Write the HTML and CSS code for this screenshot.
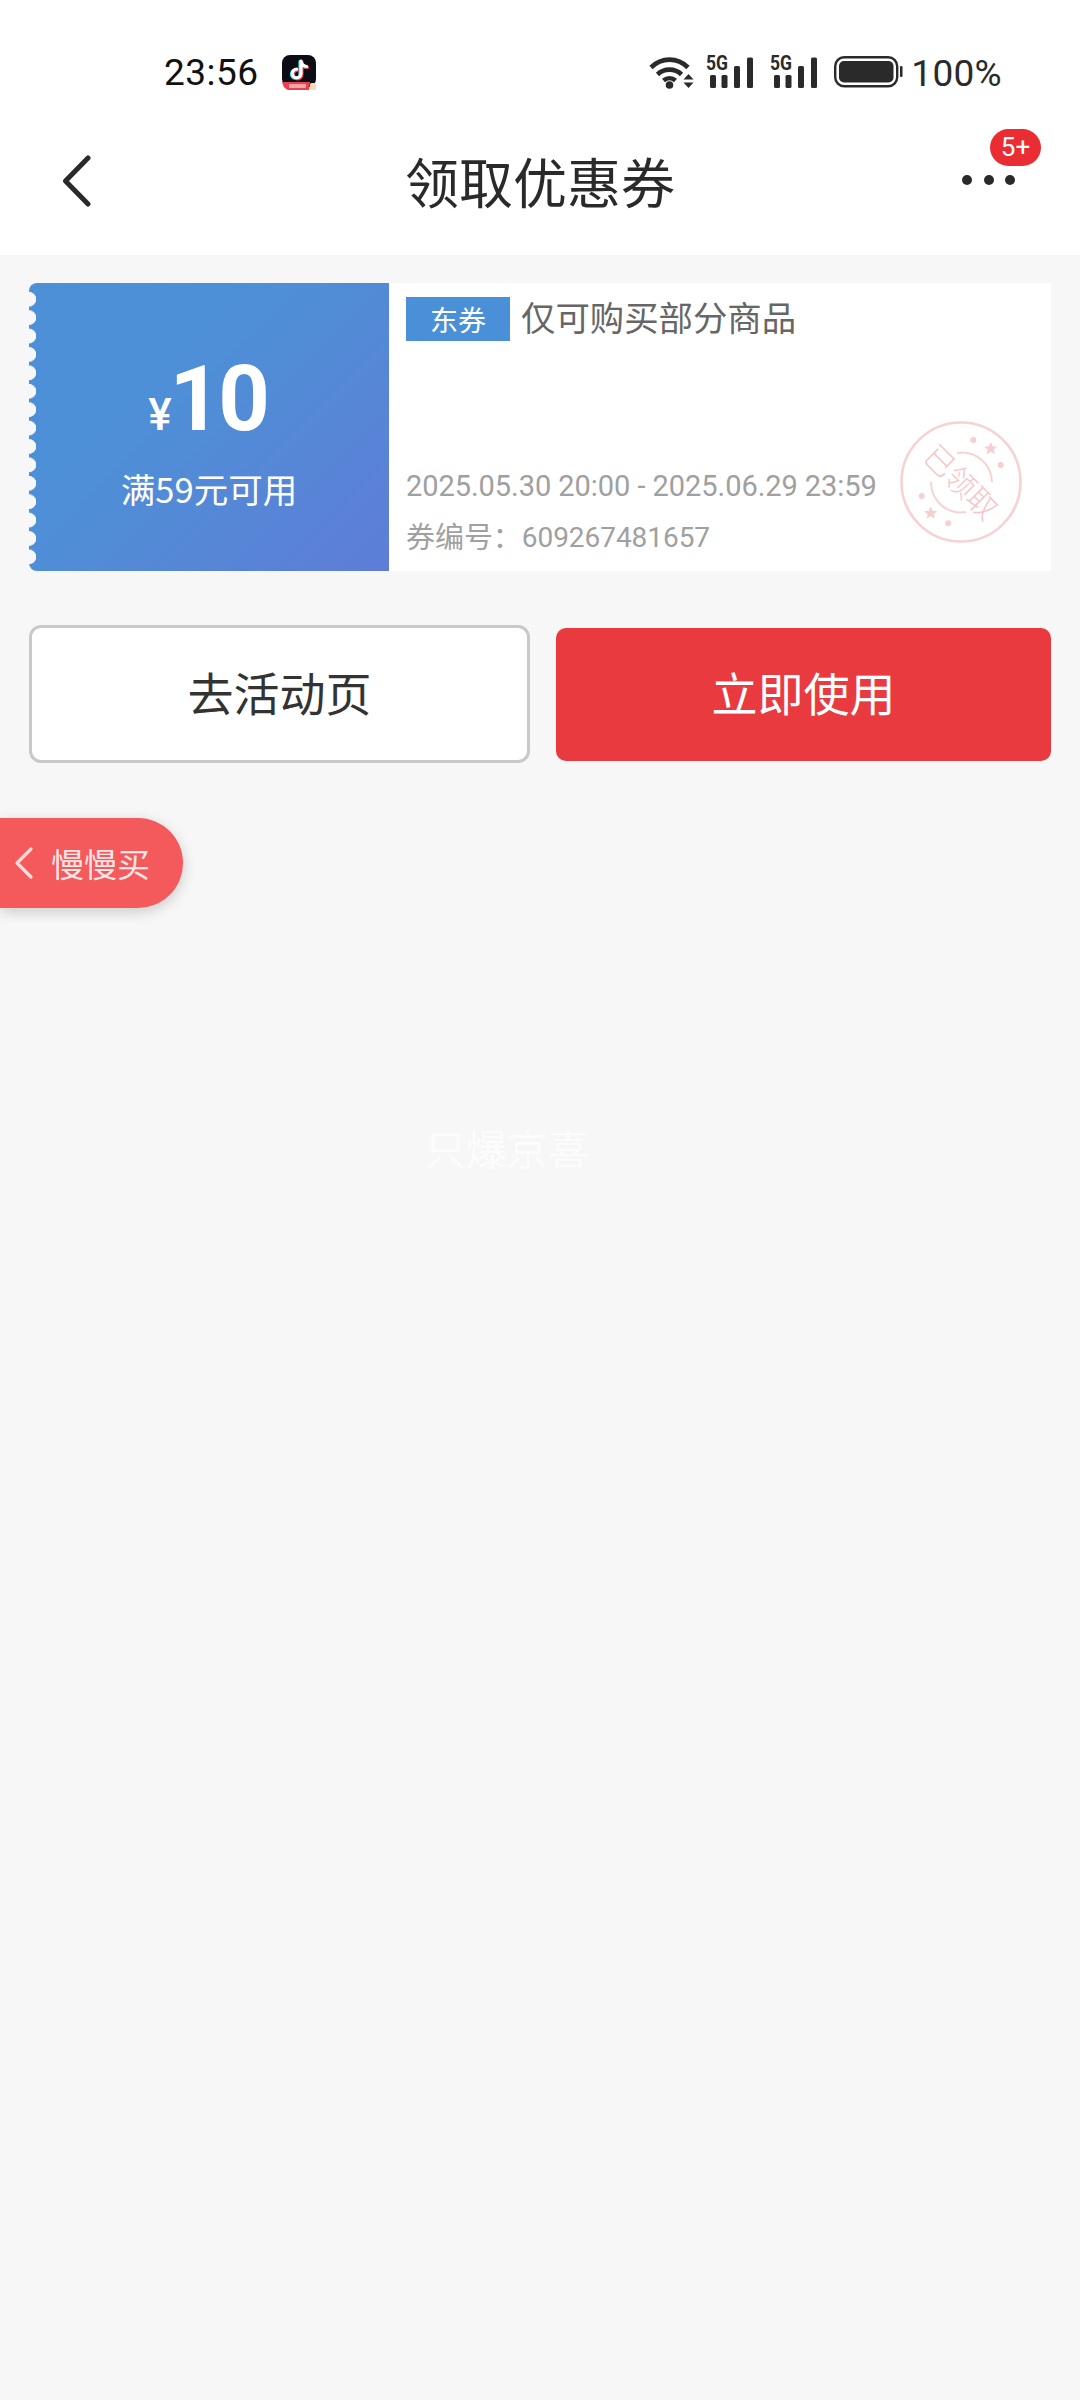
FILE: index.html
```html
<!DOCTYPE html>
<html lang="zh-CN">
<head>
<meta charset="utf-8">
<title>领取优惠券</title>
<link rel="stylesheet" href="styles.css">
</head>
<body>
<div class="status">
  <span class="time">23:56</span>
  <svg class="app-icon" width="36" height="36" viewBox="0 0 36 36">
    <rect x="1" y="0" width="34" height="32" rx="8" fill="#0d0b14"/>
    <g fill="none" stroke-width="3.2" stroke-linecap="round">
      <path d="M20 6v12.500a4.300 4.300 0 1 1-4.300-4.300M20 6c.5 3.200 2.600 5.200 5.600 5.500" stroke="#34dfe0" transform="translate(-1 .6)"/>
      <path d="M20 6v12.500a4.300 4.300 0 1 1-4.300-4.300M20 6c.5 3.200 2.600 5.200 5.600 5.500" stroke="#f0304f" transform="translate(1 1)"/>
      <path d="M20 6v12.500a4.300 4.300 0 1 1-4.300-4.300M20 6c.5 3.200 2.600 5.200 5.600 5.500" stroke="#fff"/>
    </g>
    <path d="M1 27h28l-1 8H8q-5 0-7-8z" fill="#e8424f"/>
    <rect x="8" y="29" width="17" height="4" rx="1" fill="#f9a3ad"/>
    <rect x="29" y="28" width="6" height="7" rx="1.500" fill="#f7d9b8"/>
  </svg>
  <span class="status-space"></span>
  <svg class="wifi" width="45" height="34" viewBox="0 0 45 34">
    <g fill="none" stroke="#2a2a2a" stroke-width="4.6">
      <path d="M2 12.500C12.500 2 28.500 2 39 12.500"/>
      <path d="M8.500 19.500C15 13 26 13 32.500 19.500"/>
      <path d="M14.500 25.500C18 22.500 23 22.500 26.500 25.500"/>
    </g>
    <circle cx="20.500" cy="30" r="3.800" fill="#2a2a2a"/>
    <path d="M39.500 19l5 5.500h-10zM39.500 33l5-5.500h-10z" fill="#2a2a2a"/>
  </svg>
  <svg class="signal" width="48" height="34" viewBox="0 0 48 34">
    <text class="net" x="0" y="15" textLength="22" lengthAdjust="spacingAndGlyphs">5G</text>
    <rect x="4" y="20" width="6" height="13" rx="1.500"/>
    <rect x="15.500" y="20" width="6" height="13" rx="1.500"/>
    <rect x="28" y="11" width="6" height="22" rx="1.500"/>
    <rect x="41" y="2.500" width="6" height="30.500" rx="1.500"/>
  </svg>
  <svg class="signal" width="48" height="34" viewBox="0 0 48 34">
    <text class="net" x="0" y="15" textLength="22" lengthAdjust="spacingAndGlyphs">5G</text>
    <rect x="4" y="20" width="6" height="13" rx="1.500"/>
    <rect x="15.500" y="20" width="6" height="13" rx="1.500"/>
    <rect x="28" y="11" width="6" height="22" rx="1.500"/>
    <rect x="41" y="2.500" width="6" height="30.500" rx="1.500"/>
  </svg>
  <svg class="battery" width="69" height="32" viewBox="0 0 69 32">
    <rect x="1.200" y="1.200" width="62" height="29" rx="9" fill="none" stroke="#2a2a2a" stroke-width="2.400"/>
    <rect x="5" y="5" width="54.500" height="21.500" rx="5" fill="#2a2a2a"/>
    <rect x="66" y="10" width="2.500" height="11" rx="1" fill="#2a2a2a"/>
  </svg>
  <span class="pct">100%</span>
</div>

<header class="nav">
  <svg class="back" width="30" height="52" viewBox="0 0 30 52">
    <path d="M26 3L3.500 26 26 49" fill="none" stroke="#2a2a2a" stroke-width="5" stroke-linecap="round" stroke-linejoin="round"/>
  </svg>
  <h1 class="nav-title">领取优惠券</h1>
  <div class="more">
    <i class="dot"></i><i class="dot"></i><i class="dot"></i>
    <span class="badge">5+</span>
  </div>
</header>

<section class="coupon">
  <div class="coupon-left">
    <div class="amount"><span class="yen">¥</span><span class="value">10</span></div>
    <div class="cond">满59元可用</div>
  </div>
  <div class="coupon-right">
    <div class="coupon-head">
      <span class="tag">东券</span>
      <span class="coupon-title">仅可购买部分商品</span>
    </div>
    <div class="coupon-foot">
      <div class="meta">2025.05.30 20:00 - 2025.06.29 23:59</div>
      <div class="meta meta-code"><span class="code-label">券编号：</span>609267481657</div>
    </div>
    <svg class="stamp" width="124" height="124" viewBox="0 0 124 124">
      <g fill="none" stroke="#f7d2d2">
        <circle cx="62" cy="62" r="59.500" stroke-width="2.600"/>
        <path d="M58 33A30 30 0 0 1 93 62" stroke-width="2"/>
        <path d="M32 62A30 30 0 0 0 67 92" stroke-width="2"/>
      </g>
      <g fill="#f7cfcf">
        <circle cx="74.300" cy="20" r="3"/>
        <path d="M91.700 22l1.900 4.300 4.600.4-3.500 3 1.100 4.500-4.100-2.400-4.100 2.400 1.100-4.500-3.500-3 4.600-.4z"/>
        <circle cx="101.700" cy="45" r="3"/>
        <circle cx="22.700" cy="76" r="3"/>
        <path d="M31.700 86.500l1.900 4.300 4.600.4-3.500 3 1.100 4.500-4.100-2.400-4.100 2.400 1.100-4.500-3.500-3 4.600-.4z"/>
        <circle cx="49.300" cy="103.300" r="3"/>
      </g>
      <text class="stamp-text" x="62" y="73" text-anchor="middle" transform="rotate(45 62 62)">已领取</text>
    </svg>
  </div>
</section>

<div class="actions">
  <button class="btn btn-ghost"><span class="btn-label">去活动页</span></button>
  <button class="btn btn-primary"><span class="btn-label">立即使用</span></button>
</div>

<div class="float-pill">
  <svg width="20" height="34" viewBox="0 0 20 34">
    <path d="M17 3L3 17l14 14" fill="none" stroke="#fbd9d9" stroke-width="3.200" stroke-linecap="round" stroke-linejoin="round"/>
  </svg>
  <span>慢慢买</span>
</div>

<div class="watermark">只爆京喜</div>
</body>
</html>
```

FILE: styles.css
```css
* { box-sizing: border-box; }
html, body { margin: 0; padding: 0; }
body {
  width: 1080px;
  height: 2400px;
  overflow: hidden;
  background: #f7f7f7;
  font-family: "Noto Sans CJK SC", Roboto, sans-serif;
  color: #2a2a2a;
}

/* status bar */
.status {
  height: 96px;
  background: #fff;
  display: flex;
  align-items: flex-start;
  padding: 55px 78px 0 164px;
}
.time {
  font: 400 37px/36px Roboto, sans-serif;
  color: #111;
  letter-spacing: .5px;
}
.app-icon { margin-left: 22px; }
.status-space { flex: 1; }
.wifi { margin-right: 12px; }
.signal { margin-right: 16px; fill: #2a2a2a; overflow: visible; }
.net { font: 700 20px "Roboto", sans-serif; fill: #2a2a2a; }
.battery { margin-top: 1px; margin-right: 8px; }
.pct {
  font: 400 37px/38px Roboto, sans-serif;
  color: #2a2a2a;
  letter-spacing: .3px;
}

/* nav */
.nav {
  height: 159px;
  background: #fff;
  display: flex;
  align-items: center;
  justify-content: space-between;
  padding: 0 39px 0 62px;
}
.back { margin-top: 10px; }
.nav-title {
  flex: 1;
  margin: 10px 0 0;
  text-align: center;
  font-size: 54px;
  font-weight: 400;
  line-height: 70px;
  padding-left: 22px;
}
.more {
  width: 75px;
  height: 60px;
  display: flex;
  align-items: flex-end;
  gap: 11.500px;
  position: relative;
  top: -10px;
  left: -4px;
}
.dot { display: block; width: 10px; height: 10px; border-radius: 50%; background: #2a2a2a; margin-bottom: 11px; }
.badge {
  position: absolute;
  left: 28px;
  top: -7px;
  width: 51px;
  height: 37px;
  border-radius: 19px;
  background: #ea2d33;
  color: #fff;
  font: 400 26px/37px Roboto, sans-serif;
  text-align: center;
}

/* coupon */
.coupon {
  margin: 28px 29px 0;
  width: 1022px;
  height: 288px;
  display: flex;
}
.coupon-left {
  width: 360px;
  background: linear-gradient(135deg, #4d90d7 0%, #4e8fd7 40%, #5e7dd6 100%);
  color: #fff;
  position: relative;
  border-radius: 8px 0 0 8px;
  display: flex;
  flex-direction: column;
  align-items: center;
}
.coupon-left::before {
  content: "";
  position: absolute;
  left: 0;
  top: 7px;
  bottom: 7px;
  width: 8px;
  background: radial-gradient(circle at 0 50%, #f7f7f7 7px, transparent 7.500px) 0 0 / 8px 18.420px repeat-y;
}
.amount { display: flex; align-items: baseline; margin: 64px 3px 0 0; height: 106px; }
.yen { font: 500 44px/106px Roboto, "Noto Sans CJK SC", sans-serif; margin-right: -2px; }
.value { font: 700 90px/106px Roboto, sans-serif; letter-spacing: -3px; }
.cond { font-size: 34.500px; line-height: 46px; margin-top: 12px; font-weight: 400; }

.coupon-right {
  flex: 1;
  background: #fff;
  position: relative;
  padding: 14px 0 7px 17px;
  display: flex;
  flex-direction: column;
  justify-content: space-between;
}
.coupon-head { display: flex; align-items: flex-start; gap: 12px; }
.tag {
  width: 104px;
  height: 44px;
  background: #4a90d9;
  color: #fff;
  font-size: 28px;
  line-height: 44px;
  text-align: center;
}
.coupon-title { font-size: 34.400px; line-height: 44px; color: #666; margin-top: -3px; margin-left: -1px; }
.meta { font-size: 29px; line-height: 52px; color: #a0a0a0; font-family: Roboto, "Noto Sans CJK SC", sans-serif; letter-spacing: -.05px; }
.meta-code { display: flex; font-size: 28px; }
.code-label { flex: 0 0 115px; white-space: nowrap; font-size: 29px; }
.stamp { position: absolute; right: 28px; top: 137px; }
.stamp-text { font: 300 30px "Noto Sans CJK SC", sans-serif; fill: #f6c6c6; }

/* actions */
.actions {
  margin: 54px 28px 0 29px;
  display: flex;
  align-items: center;
  gap: 26px;
}
.btn { font-family: inherit; font-size: 46px; font-weight: 400; padding: 0; }
.btn-label { position: relative; top: -3px; }
.btn-ghost {
  width: 501px;
  height: 138px;
  background: #fff;
  border: 3px solid #c9c9c9;
  border-radius: 12px;
  color: #333;
}
.btn-primary {
  width: 495px;
  height: 133px;
  background: #e93b3f;
  border: 0;
  border-radius: 10px;
  color: #fff;
}

/* floating pill */
.float-pill {
  margin-top: 55px;
  width: 183px;
  height: 90px;
  background: #f4595b;
  border-radius: 0 45px 45px 0;
  box-shadow: 0 4px 14px rgba(0, 0, 0, .18);
  display: flex;
  align-items: center;
  gap: 17px;
  padding-left: 14px;
  color: #fde6e6;
  font-size: 33px;
}

.watermark {
  margin: 216px 0 0 425px;
  font-size: 41px;
  font-weight: 400;
  line-height: 46px;
  color: #fcfcfc;
}
```
